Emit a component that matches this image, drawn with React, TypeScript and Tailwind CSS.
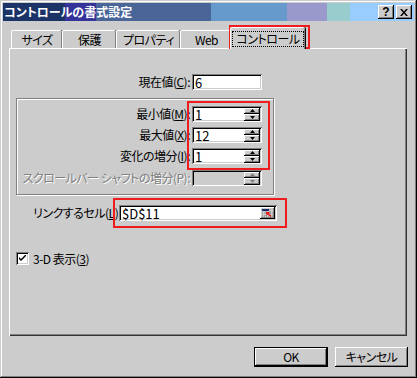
import React from "react";

const raised =
  "bg-[#cccccc] shadow-[inset_-1px_-1px_0_#000,inset_1px_1px_0_#fff,inset_-2px_-2px_0_#808080]";
const sunken =
  "shadow-[inset_1px_1px_0_#808080,inset_-1px_-1px_0_#fff,inset_2px_2px_0_#000,inset_-2px_-2px_0_#cccccc]";

function SpinButtons({ disabled = false }: { disabled?: boolean }) {
  const fill = disabled ? "#808080" : "#000";
  return (
    <div className="flex flex-col ml-auto mr-[2px] w-[16px]">
      <div className={`h-[6px] ${raised} flex items-center justify-center`}>
        <svg width="5" height="3" viewBox="0 0 5 3">
          <path d="M2.5 0 L5 3 L0 3 Z" fill={fill} />
        </svg>
      </div>
      <div className={`h-[7px] ${raised} flex items-center justify-center`}>
        <svg width="5" height="3" viewBox="0 0 5 3">
          <path d="M0 0 L5 0 L2.5 3 Z" fill={fill} />
        </svg>
      </div>
    </div>
  );
}

function SpinRow({
  label,
  value,
  disabled = false,
}: {
  label: React.ReactNode;
  value: string;
  disabled?: boolean;
}) {
  return (
    <div className="flex items-center h-[16px]">
      <div
        className={`w-[175px] pr-[2px] text-right whitespace-nowrap ${
          disabled ? "text-[#808080] [text-shadow:1px_1px_0_#fff]" : "text-black"
        }`}
      >
        {label}
      </div>
      <div
        className={`w-[70px] h-[16px] flex items-center pl-[3px] ${
          disabled ? "bg-[#cccccc]" : "bg-white"
        } ${sunken}`}
      >
        <span className="text-[13px] tracking-normal">{value}</span>
        <SpinButtons disabled={disabled} />
      </div>
    </div>
  );
}

function Tab({
  label,
  width,
  selected = false,
}: {
  label: string;
  width: string;
  selected?: boolean;
}) {
  if (selected) {
    return (
      <div
        className={`relative z-10 ${width} h-[22px] -mb-[1px] -ml-[2px] bg-[#cccccc] rounded-t-[2px] border-t border-l border-white shadow-[inset_-1px_0_0_#808080,1px_0_0_#000] flex items-center justify-center whitespace-nowrap`}
      >
        <span className="outline-1 outline-dotted outline-black px-[3px] leading-[14px]">
          {label}
        </span>
      </div>
    );
  }
  return (
    <div
      className={`${width} h-[18px] bg-[#cccccc] rounded-t-[2px] border-t border-l border-white shadow-[inset_-1px_0_0_#808080,1px_0_0_#000] flex items-center justify-center whitespace-nowrap`}
    >
      {label}
    </div>
  );
}

export default function App() {
  return (
    <div
      className={`relative w-[417px] h-[378px] bg-[#cccccc] p-[3px] font-['Noto_Sans_CJK_JP',sans-serif] text-[12px] leading-none tracking-[-0.5px] text-black [font-feature-settings:'palt'] shadow-[inset_-1px_-1px_0_#000,inset_1px_1px_0_#cccccc,inset_-2px_-2px_0_#808080,inset_2px_2px_0_#fff]`}
    >
      {/* title bar */}
      <div className="h-[18px] flex items-center pl-[1px] pr-[2px] bg-[linear-gradient(to_right,#1b3366_0px,#1b3366_62px,#333399_62px,#333399_93px,#4a6699_93px,#4a6699_208px,#6699cc_208px,#6699cc_284px,#9999cc_284px,#9999cc_324px,#99cccc_324px,#99cccc_347px,#99ccff_347px)]">
        <span className="text-white font-bold text-[12px] tracking-[0px]">
          コントロールの書式設定
        </span>
        <div className="ml-auto flex gap-[2px]">
          <div
            className={`w-[16px] h-[14px] ${raised} flex items-center justify-center font-['Liberation_Sans',sans-serif] font-bold text-[12px] tracking-normal`}
          >
            ?
          </div>
          <div className={`w-[16px] h-[14px] ${raised} flex items-center justify-center`}>
            <svg width="8" height="7" viewBox="0 0 8 7">
              <path d="M0 0 L2 0 L4 2.5 L6 0 L8 0 L5 3.5 L8 7 L6 7 L4 4.5 L2 7 L0 7 L3 3.5 Z" fill="#000" />
            </svg>
          </div>
        </div>
      </div>

      {/* tabs + panel */}
      <div className="ml-[6px] mt-[6px]">
        <div className="flex items-end h-[21px] pl-[2px]">
          <Tab label="サイズ" width="w-[51px]" />
          <Tab label="保護" width="w-[54px]" />
          <Tab label="プロパティ" width="w-[64px]" />
          <Tab label="Web" width="w-[52px]" />
          <Tab label="コントロール" width="w-[75px]" selected />
        </div>

        <div className="relative w-[398px] h-[288px] border-t border-l border-white shadow-[inset_-1px_-1px_0_#333,inset_-2px_-2px_0_#808080] pt-[25px]">
          {/* current value */}
          <div className="flex items-center h-[16px]">
            <div className="w-[182px] pr-[2px] text-right whitespace-nowrap">
              現在値(<u>C</u>):
            </div>
            <div className={`w-[70px] h-[16px] bg-white flex items-center pl-[3px] ${sunken}`}>
              <span className="text-[13px] tracking-normal">6</span>
            </div>
          </div>

          {/* group */}
          <div className="ml-[6px] mt-[8px] w-[258px] h-[97px] border border-[#808080] shadow-[inset_1px_1px_0_#fff,1px_1px_0_#fff] pt-[7px] flex flex-col">
            <SpinRow label={<>最小値(<u>M</u>):</>} value="1" />
            <div className="h-[5px]" />
            <SpinRow label={<>最大値(<u>X</u>):</>} value="12" />
            <div className="h-[5px]" />
            <SpinRow label={<>変化の増分(<u>I</u>):</>} value="1" />
            <div className="h-[6px]" />
            <SpinRow label="スクロールバー シャフトの増分(P):" value="" disabled />
          </div>

          {/* link cell */}
          <div className="flex items-center h-[16px] ml-[23px] mt-[10px]">
            <div className="w-[86px] pr-[2px] whitespace-nowrap">
              リンクするセル(<u>L</u>):
            </div>
            <div className={`w-[158px] h-[16px] bg-white flex items-center pl-[3px] ${sunken}`}>
              <span className="text-[13px] tracking-normal">$D$11</span>
              <div className={`ml-auto mr-[2px] w-[15px] h-[12px] ${raised} flex items-center justify-center`}>
                <svg width="11" height="9" viewBox="0 0 11 9">
                  <rect x="0" y="0" width="7" height="2" fill="#1b2a6b" />
                  <path d="M0 4 H11 M0 7 H11 M4 2 V9 M8 0 V9" stroke="#808080" strokeWidth="1" strokeDasharray="1 1" />
                  <path d="M4 3 L8 3 L6.8 4.2 L9.5 6.9 L8.4 8 L5.7 5.3 L4.5 6.5 Z" fill="#ee1111" />
                </svg>
              </div>
            </div>
          </div>

          {/* checkbox */}
          <div className="flex items-center ml-[6px] mt-[31px] gap-[4px]">
            <div className={`w-[13px] h-[13px] bg-white ${sunken} flex items-center justify-center`}>
              <svg width="7" height="7" viewBox="0 0 7 7">
                <path d="M0 2 L0 4 L2 6 L7 1 L7 -1 L2 4 Z" fill="#000" />
              </svg>
            </div>
            <span>
              3-D 表示(<u>3</u>)
            </span>
          </div>

          {/* annotation rectangles */}
          <div className="absolute left-[219px] top-[-24px] w-[81px] h-[24px] border-2 border-[#ee1c1c]" />
          <div className="absolute left-[177px] top-[52px] w-[83px] h-[69px] border-2 border-[#ee1c1c]" />
          <div className="absolute left-[103px] top-[149px] w-[174px] h-[30px] border-2 border-[#ee1c1c]" />
        </div>
      </div>

      {/* buttons */}
      <div className="flex justify-end gap-[7px] mt-[11px] pr-[6px]">
        <div className="w-[74px] h-[20px] border border-black shadow-[inset_-1px_-1px_0_#000,inset_1px_1px_0_#fff,inset_-2px_-2px_0_#808080] flex items-center justify-center">
          OK
        </div>
        <div className={`w-[73px] h-[20px] ${raised} flex items-center justify-center`}>
          キャンセル
        </div>
      </div>
    </div>
  );
}
